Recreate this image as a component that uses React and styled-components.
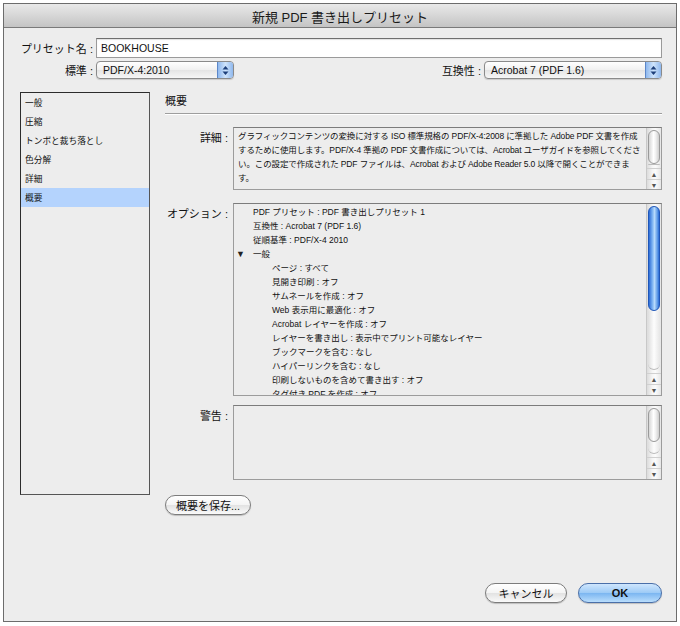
import React from 'react';
import styled, { createGlobalStyle, css } from 'styled-components';

const GlobalStyle = createGlobalStyle`
  html, body { margin: 0; padding: 0; background: #ffffff; }
  body {
    font-family: "Liberation Sans", "Noto Sans CJK JP", sans-serif;
    color: #111;
  }
  * { box-sizing: border-box; }
`;

const Window = styled.div`
  margin: 3px 0 0 3px;
  width: 674px;
  height: 619px;
  border: 1px solid #6c6c6c;
  background: #ededed;
  display: flex;
  flex-direction: column;
`;

const TitleBar = styled.div`
  height: 24px;
  flex: none;
  background: linear-gradient(#e9e9e9, #c4c4c4);
  border-bottom: 1px solid #7a7a7a;
  display: flex;
  align-items: center;
  justify-content: center;
  font-size: 13px;
  color: #1a1a1a;
  padding-top: 1px;
`;

const Body = styled.div`
  flex: 1;
  display: flex;
  flex-direction: column;
  padding: 10px 14px 18px 15px;
`;

const FieldRow = styled.div`
  display: flex;
  align-items: center;
  height: ${p => p.$h}px;
  margin-bottom: ${p => p.$mb || 0}px;
`;

const Label = styled.div`
  width: ${p => p.$w}px;
  flex: none;
  text-align: right;
  font-size: 11px;
  padding-right: 3px;
  white-space: nowrap;
`;

const TextInput = styled.div`
  flex: 1;
  height: 20px;
  background: #fff;
  border: 1px solid #9a9a9a;
  border-top-color: #6f6f6f;
  box-shadow: inset 0 1px 1px rgba(0,0,0,0.12);
  font-size: 10.5px;
  display: flex;
  align-items: center;
  padding-left: 4px;
`;

const Select = styled.div`
  width: ${p => p.$w}px;
  height: 18px;
  border: 1px solid #8a8a8a;
  border-radius: 4px;
  background: linear-gradient(#ffffff, #f0f0f0 50%, #e4e4e4 51%, #f6f6f6);
  box-shadow: 0 1px 1px rgba(0,0,0,0.15);
  display: flex;
  align-items: center;
  font-size: 10.5px;
  padding-left: 6px;
  overflow: hidden;
`;

const SelectText = styled.span`
  flex: 1;
  white-space: nowrap;
`;

const SelectArrows = styled.div`
  width: 16px;
  height: 100%;
  flex: none;
  border-left: 1px solid #5c87c9;
  background: linear-gradient(90deg, #8fb8ee, #cfe4fb 50%, #8fb8ee);
  display: flex;
  align-items: center;
  justify-content: center;
`;

const Spacer = styled.div`
  flex: 1;
`;

const Main = styled.div`
  display: flex;
  margin-top: 13px;
  gap: 15px;
`;

const Sidebar = styled.div`
  width: 130px;
  height: 403px;
  flex: none;
  margin-left: 1px;
  border: 1px solid #2c2c2c;
  border-right-color: #555;
  border-bottom-color: #555;
  background: #ededed;
`;

const SideItem = styled.div`
  height: 19px;
  padding-left: 4px;
  display: flex;
  align-items: center;
  font-size: 8.7px;
  background: ${p => (p.$selected ? '#b4d3fd' : 'transparent')};
`;

const Content = styled.div`
  flex: 1;
  min-width: 0;
  display: flex;
  flex-direction: column;
  padding-top: 2px;
`;

const Heading = styled.div`
  font-size: 11px;
  line-height: 13px;
  padding: 1px 0 5px;
  border-bottom: 1px solid #9e9e9e;
  box-shadow: 0 1px 0 #fff;
  margin-bottom: 13px;
`;

const SectionRow = styled.div`
  display: flex;
  min-width: 0;
  margin-bottom: ${p => p.$mb}px;
`;

const SectionLabel = styled.div`
  width: 68px;
  flex: none;
  text-align: right;
  font-size: 11px;
  padding-right: 5px;
  padding-top: 2px;
  white-space: nowrap;
`;

const Box = styled.div`
  flex: 1;
  min-width: 0;
  height: ${p => p.$h}px;
  border: 1px solid #9c9c9c;
  border-top-color: #7c7c7c;
  background: #ededed;
  display: flex;
  overflow: hidden;
`;

const BoxText = styled.div`
  flex: 1;
  min-width: 0;
  padding: ${p => p.$pad || '2px 4px'};
  font-size: 8.5px;
  line-height: 14px;
  letter-spacing: ${p => p.$tight ? '-0.12px' : '0'};
  overflow: hidden;
`;

const Line = styled.div`
  white-space: nowrap;
  padding-left: ${p => p.$indent || 0}px;
  display: flex;
  align-items: center;
`;

const Disclosure = styled.span`
  width: 15px;
  margin-left: -17px;
  margin-right: 2px;
  font-size: 9px;
  color: #222;
`;

const Scrollbar = styled.div`
  width: 15px;
  flex: none;
  border-left: 1px solid #c8c8c8;
  background: linear-gradient(90deg, #dcdcdc, #f6f6f6 40%, #fbfbfb 60%, #e6e6e6);
  display: flex;
  flex-direction: column;
  padding-top: 2px;
`;

const Thumb = styled.div`
  height: ${p => p.$h}px;
  margin: 0 1px;
  flex: none;
  border-radius: 7px;
  ${p => p.$active
    ? css`
      border: 1px solid #1f56b8;
      background: linear-gradient(90deg, #2b6bd6, #7fb4f2 35%, #b7dafc 55%, #5b97e6 85%, #2b6bd6);
    `
    : css`
      border: 1px solid #9a9a9a;
      background: linear-gradient(90deg, #d6d6d6, #ffffff 45%, #f2f2f2 65%, #cfcfcf);
    `}
`;

const Track = styled.div`
  flex: 1;
  border-radius: 0 0 7px 7px;
  margin: 0 1px 3px;
  border-bottom: 1px solid #bcbcbc;
  background: linear-gradient(90deg, #dedede, #fdfdfd 50%, #e6e6e6);
`;

const Arrow = styled.div`
  height: 11px;
  flex: none;
  border-top: 1px solid #d0d0d0;
  display: flex;
  align-items: center;
  justify-content: center;
  font-size: 7px;
  color: #555;
`;

const AquaButton = styled.button`
  height: 20px;
  width: ${p => p.$w}px;
  border-radius: 10px;
  font-family: inherit;
  font-size: 11px;
  font-weight: ${p => (p.$primary ? 'bold' : 'normal')};
  color: #111;
  padding: 0;
  border: 1px solid ${p => (p.$primary ? '#4a6fa8' : '#7c7c7c')};
  background: ${p => (p.$primary
    ? 'linear-gradient(#cfe6fd, #9ccaf6 50%, #7bb6f1 51%, #b9ddfc)'
    : 'linear-gradient(#ffffff, #f4f4f4 50%, #e2e2e2 51%, #fafafa)')};
  box-shadow: 0 1px 1px rgba(0,0,0,0.2);
`;

const Footer = styled.div`
  margin-top: auto;
  display: flex;
  justify-content: flex-end;
  gap: 11px;
`;

function ScrollBar({ thumb, active }) {
  return (
    <Scrollbar>
      <Thumb $h={thumb} $active={active} />
      <Track />
      <Arrow>▲</Arrow>
      <Arrow>▼</Arrow>
    </Scrollbar>
  );
}

function UpDown() {
  return (
    <svg width="7" height="11" viewBox="0 0 7 11">
      <path d="M3.5 1 L6.5 4.5 L0.5 4.5 Z" fill="#1d3f7a" />
      <path d="M3.5 10 L6.5 6.5 L0.5 6.5 Z" fill="#1d3f7a" />
    </svg>
  );
}

const sideItems = ['一般', '圧縮', 'トンボと裁ち落とし', '色分解', '詳細', '概要'];

const detailLines = [
  'グラフィックコンテンツの変換に対する ISO 標準規格の PDF/X-4:2008 に準拠した Adobe PDF 文書を作成',
  'するために使用します。PDF/X-4 準拠の PDF 文書作成については、Acrobat ユーザガイドを参照してくださ',
  'い。この設定で作成された PDF ファイルは、Acrobat および Adobe Reader 5.0 以降で開くことができま',
  'す。',
];

const optionLines = [
  { t: 'PDF プリセット : PDF 書き出しプリセット 1', i: 0 },
  { t: '互換性 : Acrobat 7 (PDF 1.6)', i: 0 },
  { t: '従順基準 : PDF/X-4 2010', i: 0 },
  { t: '一般', i: 0, open: true },
  { t: 'ページ : すべて', i: 19 },
  { t: '見開き印刷 : オフ', i: 19 },
  { t: 'サムネールを作成 : オフ', i: 19 },
  { t: 'Web 表示用に最適化 : オフ', i: 19 },
  { t: 'Acrobat レイヤーを作成 : オフ', i: 19 },
  { t: 'レイヤーを書き出し : 表示中でプリント可能なレイヤー', i: 19 },
  { t: 'ブックマークを含む : なし', i: 19 },
  { t: 'ハイパーリンクを含む : なし', i: 19 },
  { t: '印刷しないものを含めて書き出す : オフ', i: 19 },
  { t: 'タグ付き PDF を作成 : オフ', i: 19 },
];

export default function App() {
  return (
    <>
      <GlobalStyle />
      <Window>
        <TitleBar>新規 PDF 書き出しプリセット</TitleBar>
        <Body>
          <FieldRow $h={20} $mb={3}>
            <Label $w={77}>プリセット名 :</Label>
            <TextInput>BOOKHOUSE</TextInput>
          </FieldRow>
          <FieldRow $h={18}>
            <Label $w={77}>標準 :</Label>
            <Select $w={138}>
              <SelectText>PDF/X-4:2010</SelectText>
              <SelectArrows><UpDown /></SelectArrows>
            </Select>
            <Spacer />
            <Label $w={50}>互換性 :</Label>
            <Select $w={178}>
              <SelectText>Acrobat 7 (PDF 1.6)</SelectText>
              <SelectArrows><UpDown /></SelectArrows>
            </Select>
          </FieldRow>

          <Main>
            <Sidebar>
              {sideItems.map(s => (
                <SideItem key={s} $selected={s === '概要'}>{s}</SideItem>
              ))}
            </Sidebar>
            <Content>
              <Heading>概要</Heading>
              <SectionRow $mb={13}>
                <SectionLabel>詳細 :</SectionLabel>
                <Box $h={63}>
                  <BoxText $pad="1px 4px" $tight>
                    {detailLines.map((l, n) => <Line key={n}>{l}</Line>)}
                  </BoxText>
                  <ScrollBar thumb={34} />
                </Box>
              </SectionRow>
              <SectionRow $mb={9}>
                <SectionLabel>オプション :</SectionLabel>
                <Box $h={193}>
                  <BoxText $pad="1px 4px 0 19px">
                    {optionLines.map((l, n) => (
                      <Line key={n} $indent={l.i}>
                        {l.open && <Disclosure>▼</Disclosure>}
                        {l.t}
                      </Line>
                    ))}
                  </BoxText>
                  <ScrollBar thumb={105} active />
                </Box>
              </SectionRow>
              <SectionRow $mb={15}>
                <SectionLabel>警告 :</SectionLabel>
                <Box $h={75}>
                  <BoxText />
                  <ScrollBar thumb={34} />
                </Box>
              </SectionRow>
              <div>
                <AquaButton $w={86}>概要を保存...</AquaButton>
              </div>
            </Content>
          </Main>

          <Footer>
            <AquaButton $w={82}>キャンセル</AquaButton>
            <AquaButton $w={84} $primary>OK</AquaButton>
          </Footer>
        </Body>
      </Window>
    </>
  );
}
